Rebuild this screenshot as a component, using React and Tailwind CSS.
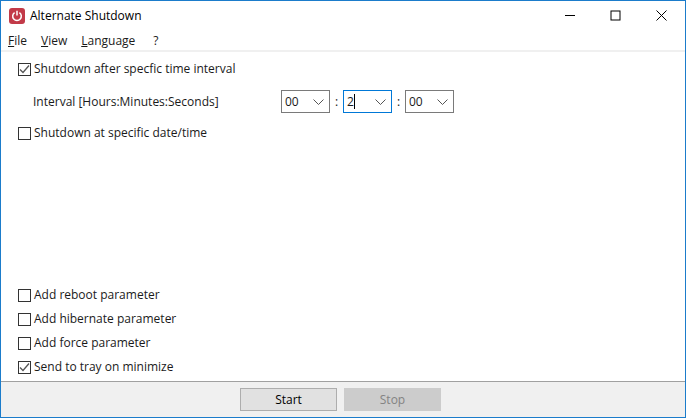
import React from 'react';

function Check({ checked, label }) {
    return (
        <label className="flex items-center h-[14px]">
            <span className="w-[13px] h-[13px] border border-[#333333] bg-white flex items-center justify-center shrink-0">
                {checked && (
                    <svg width="11" height="11" viewBox="0 0 11 11" fill="none">
                        <path d="M1 5.5 L4 8.5 L10 1.5" stroke="#555555" strokeWidth="1.3" />
                    </svg>
                )}
            </span>
            <span className="ml-[3px] text-[#1a1a1a]">{label}</span>
        </label>
    );
}

function Combo({ value, active, caret }) {
    return (
        <div className={`w-[49px] h-[23px] border flex items-center justify-between pl-[3px] pr-[5px] bg-white ${active ? 'border-[#0078d7]' : 'border-[#7a7a7a]'}`}>
            <span className="flex items-center text-[#1a1a1a]">
                {value}
                {caret && <span className="w-px h-[15px] bg-black" />}
            </span>
            <svg width="11" height="6" viewBox="0 0 11 6" fill="none">
                <path d="M0.5 0.5 L5.5 5.5 L10.5 0.5" stroke="#555555" />
            </svg>
        </div>
    );
}

function Menu({ first, rest }) {
    return (
        <span>
            <span className="underline">{first}</span>{rest}
        </span>
    );
}

export default function App() {
    return (
        <div className="w-[686px] h-[418px] border border-[#1b7ccb] bg-white flex flex-col text-[12px] font-['Open_Sans',sans-serif] text-[#1a1a1a] overflow-hidden">
            <div className="h-[29px] flex items-center shrink-0">
                <div className="ml-[8px] w-[16px] h-[16px] rounded-[3px] bg-[#c23a48] flex items-center justify-center">
                    <svg width="12" height="12" viewBox="0 0 12 12" fill="none">
                        <path d="M3.6 2.6 A4.3 4.3 0 1 0 8.4 2.6" stroke="white" strokeWidth="1.5" />
                        <path d="M6 0.8 V5.6" stroke="white" strokeWidth="1.5" />
                    </svg>
                </div>
                <span className="ml-[5px] text-black">Alternate Shutdown</span>
                <div className="ml-auto flex items-center gap-[35px] mr-[18px]">
                    <svg width="10" height="11" viewBox="0 0 10 11"><path d="M0 5.5 H10" stroke="black" /></svg>
                    <svg width="11" height="11" viewBox="0 0 11 11" fill="none"><rect x="1" y="1" width="9" height="9" stroke="black" /></svg>
                    <svg width="11" height="11" viewBox="0 0 11 11" fill="none"><path d="M0.5 0.5 L10.5 10.5 M10.5 0.5 L0.5 10.5" stroke="black" /></svg>
                </div>
            </div>
            <div className="h-[20px] flex items-center gap-[14px] pl-[7px] pt-[2px] shrink-0">
                <Menu first="F" rest="ile" />
                <Menu first="V" rest="iew" />
                <Menu first="L" rest="anguage" />
                <span className="ml-[4px]">?</span>
            </div>
            <div className="h-[2px] bg-[#f0f0f0] shrink-0" />
            <div className="flex-1 flex flex-col pl-[17px] pt-[10px]">
                <Check checked label="Shutdown after specfic time interval" />
                <div className="flex items-center mt-[14px] h-[23px]">
                    <span className="ml-[15px] w-[248px]">Interval [Hours:Minutes:Seconds]</span>
                    <Combo value="00" />
                    <span className="w-[13px] text-center">:</span>
                    <Combo value="2" active caret />
                    <span className="w-[13px] text-center">:</span>
                    <Combo value="00" />
                </div>
                <div className="mt-[13px]">
                    <Check label="Shutdown at specific date/time" />
                </div>
                <div className="mt-auto flex flex-col gap-[10px] pb-[7px]">
                    <Check label="Add reboot parameter" />
                    <Check label="Add hibernate parameter" />
                    <Check label="Add force parameter" />
                    <Check checked label="Send to tray on minimize" />
                </div>
            </div>
            <div className="h-[36px] shrink-0 border-t border-[#a0a0a0] bg-[#f0f0f0] flex items-center justify-center gap-[7px] pr-[5px]">
                <button className="w-[97px] h-[23px] border border-[#adadad] bg-[#e1e1e1] text-black">Start</button>
                <button className="w-[97px] h-[23px] bg-[#cccccc] text-[#838383]">Stop</button>
            </div>
        </div>
    );
}
